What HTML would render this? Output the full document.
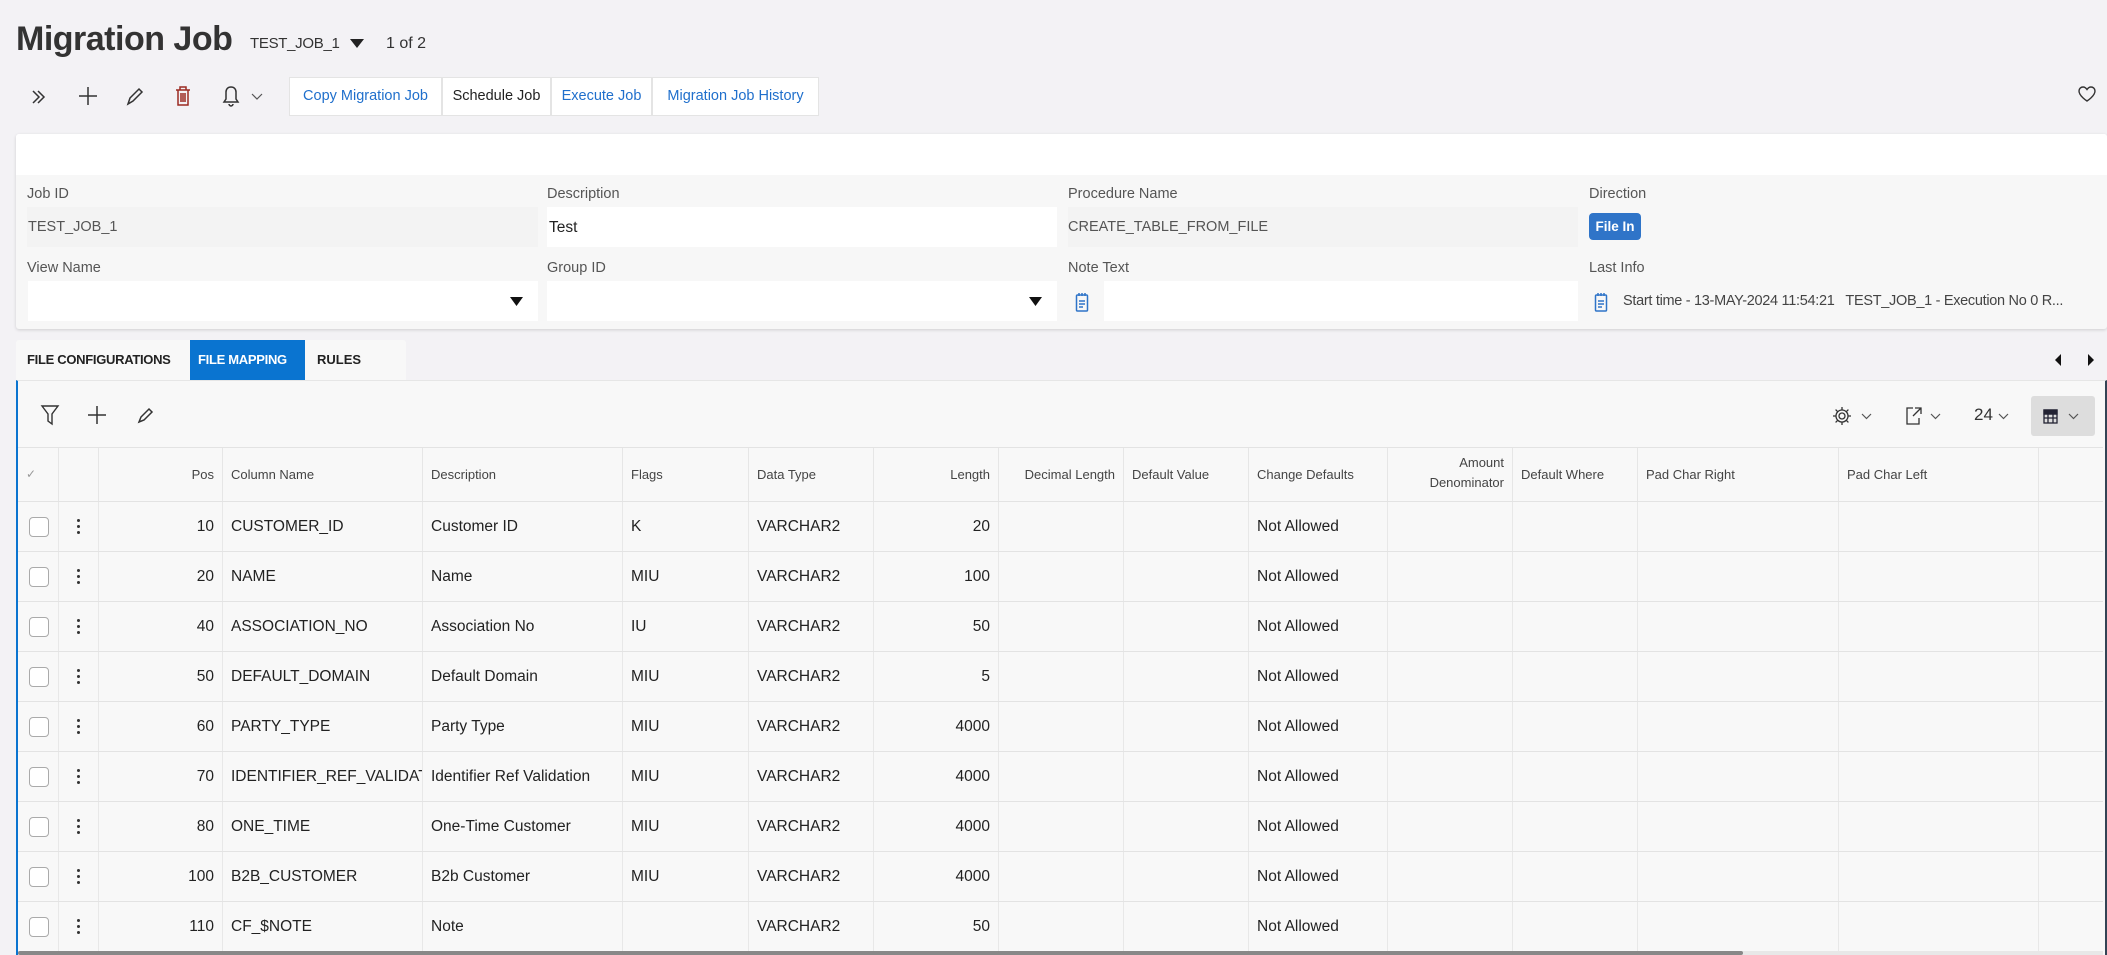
<!DOCTYPE html>
<html><head><meta charset="utf-8"><style>
*{box-sizing:border-box;margin:0;padding:0}
body{width:2107px;height:955px;overflow:hidden;background:#f3f2f5;font-family:"Liberation Sans",sans-serif;color:#333;position:relative;font-size:15px}
.a{position:absolute;white-space:nowrap}
.lbl{font-size:14.5px;color:#555}
.btn{position:absolute;top:77px;height:39px;background:#fff;border:1px solid #e4e4e4;font-size:14.5px;line-height:37px;text-align:center;color:#1f6fcc}
.hd{position:absolute;top:448px;height:53px;font-size:13px;color:#444;line-height:53px;border-right:1px solid #e6e6e6;padding:0 8px}
.cell{position:absolute;height:50px;line-height:50px;font-size:15.5px;color:#222;border-right:1px solid #e8e8e8;padding:0 8px;overflow:hidden}
.rowl{position:absolute;left:18px;width:2085px;height:1px;background:#e3e3e3}
.cb{position:absolute;left:29px;width:20px;height:20px;border:1.5px solid #aaa;border-radius:4px;background:#fff}
.dots{position:absolute;left:77px;width:3px}
.dots i{display:block;width:3px;height:3px;background:#333;border-radius:50%;margin-bottom:3px}
</style></head><body>
<div class="a" style="left:16px;top:20px;font-size:34px;font-weight:bold;color:#333;letter-spacing:-0.5px">Migration Job</div>
<div class="a" style="left:250px;top:35px;font-size:15px;color:#333;letter-spacing:-0.3px">TEST_JOB_1</div>
<svg class="a" style="left:349px;top:38px" width="16" height="12"><path d="M1 1h14L8 10z" fill="#222"/></svg>
<div class="a" style="left:386px;top:35px;font-size:16px;color:#333">1 of 2</div>

<svg class="a" style="left:28px;top:86px" width="22" height="22" fill="none" stroke="#333" stroke-width="1.5"><path d="M5 5l6 6-6 6M10 5l6 6-6 6"/></svg>
<svg class="a" style="left:77px;top:85px" width="22" height="22" fill="none" stroke="#333" stroke-width="1.5"><path d="M11 2v18M2 11h18"/></svg>
<svg class="a" style="left:124px;top:86px" width="22" height="22" fill="none" stroke="#333" stroke-width="1.5"><path d="M4 18l2-6 9-9 3 3-9 9z"/></svg>
<svg class="a" style="left:172px;top:85px" width="22" height="22" fill="none" stroke="#9b2b22" stroke-width="1.5"><path d="M4 5h14M8 5V2h6v3M6 5v15h10V5M9 8v9M11 8v9M13 8v9"/></svg>
<svg class="a" style="left:220px;top:85px" width="22" height="22" fill="none" stroke="#333" stroke-width="1.5"><path d="M11 2c-3 0-5 2-5 5v7l-2 3h14l-2-3V7c0-3-2-5-5-5zM9 19c0 1 1 2 2 2s2-1 2-2"/></svg>
<svg class="a" style="left:251px;top:93px" width="12" height="8" fill="none" stroke="#555" stroke-width="1.2"><path d="M1 1l5 5 5-5"/></svg>
<div class="btn" style="left:289px;width:153px">Copy Migration Job</div>
<div class="btn" style="left:442px;width:109px;color:#222">Schedule Job</div>
<div class="btn" style="left:551px;width:101px">Execute Job</div>
<div class="btn" style="left:652px;width:167px">Migration Job History</div>
<svg class="a" style="left:2077px;top:85px" width="20" height="18" fill="none" stroke="#333" stroke-width="1.4"><path d="M10 16S2 11 2 6c0-2.5 2-4 4-4 2 0 3 1 4 2.5C11 3 12 2 14 2c2 0 4 1.5 4 4 0 5-8 10-8 10z"/></svg>

<div class="a" style="left:16px;top:134px;width:2091px;height:195px;background:#f7f7f7;box-shadow:0 1px 3px rgba(0,0,0,.15);border-radius:3px"></div>
<div class="a" style="left:16px;top:134px;width:2091px;height:41px;background:#fff;border-radius:3px 3px 0 0"></div>
<div class="a lbl" style="left:27px;top:186px">Job ID</div>
<div class="a lbl" style="left:547px;top:186px">Description</div>
<div class="a lbl" style="left:1068px;top:186px">Procedure Name</div>
<div class="a lbl" style="left:1589px;top:186px">Direction</div>
<div class="a" style="left:27px;top:207px;width:511px;height:40px;background:#f3f3f3"></div>
<div class="a" style="left:28px;top:219px;font-size:14.5px;color:#555">TEST_JOB_1</div>
<div class="a" style="left:547px;top:207px;width:510px;height:40px;background:#fff"></div>
<div class="a" style="left:549px;top:219px;font-size:15.5px;color:#222">Test</div>
<div class="a" style="left:1068px;top:207px;width:510px;height:40px;background:#f3f3f3"></div>
<div class="a" style="left:1068px;top:219px;font-size:14.5px;color:#555">CREATE_TABLE_FROM_FILE</div>
<div class="a" style="left:1589px;top:213px;width:52px;height:27px;background:#2f74c8;border-radius:4px;color:#fff;font-weight:bold;font-size:13.5px;line-height:27px;text-align:center">File In</div>
<div class="a lbl" style="left:27px;top:260px">View Name</div>
<div class="a lbl" style="left:547px;top:260px">Group ID</div>
<div class="a lbl" style="left:1068px;top:260px">Note Text</div>
<div class="a lbl" style="left:1589px;top:260px">Last Info</div>
<div class="a" style="left:28px;top:281px;width:510px;height:40px;background:#fff"></div>
<svg class="a" style="left:510px;top:297px" width="13" height="9"><path d="M0 0h13L6.5 9z" fill="#111"/></svg>
<div class="a" style="left:547px;top:281px;width:510px;height:40px;background:#fff"></div>
<svg class="a" style="left:1029px;top:297px" width="13" height="9"><path d="M0 0h13L6.5 9z" fill="#111"/></svg>
<svg class="a" style="left:1075px;top:292px" width="14" height="20" fill="none" stroke="#2f74c8" stroke-width="1.5"><rect x="1.5" y="3" width="11" height="16" rx="1"/><path d="M4 1v3M7 1v3M10 1v3M4 9h6M4 12h6M4 15h4"/></svg>
<div class="a" style="left:1104px;top:281px;width:474px;height:40px;background:#fff"></div>
<svg class="a" style="left:1594px;top:292px" width="14" height="20" fill="none" stroke="#2f74c8" stroke-width="1.5"><rect x="1.5" y="3" width="11" height="16" rx="1"/><path d="M4 1v3M7 1v3M10 1v3M4 9h6M4 12h6M4 15h4"/></svg>
<div class="a" style="left:1623px;top:293px;font-size:14.5px;color:#444;letter-spacing:-0.3px">Start time - 13-MAY-2024 11:54:21&nbsp;&nbsp; TEST_JOB_1 - Execution No 0 R...</div>

<div class="a" style="left:16px;top:340px;width:390px;height:41px;background:#f8f8f8;border-radius:3px 3px 0 0"></div>
<div class="a" style="left:27px;top:352px;font-size:13px;font-weight:bold;color:#222;letter-spacing:-0.3px">FILE CONFIGURATIONS</div>
<div class="a" style="left:190px;top:340px;width:115px;height:41px;background:#0a74d0"></div>
<div class="a" style="left:198px;top:352px;font-size:13px;font-weight:bold;color:#fff;letter-spacing:-0.3px">FILE MAPPING</div>
<div class="a" style="left:317px;top:352px;font-size:13px;font-weight:bold;color:#222">RULES</div>
<svg class="a" style="left:2053px;top:353px" width="10" height="14"><path d="M8 1L2 7l6 6z" fill="#111"/></svg>
<svg class="a" style="left:2086px;top:353px" width="10" height="14"><path d="M2 1l6 6-6 6z" fill="#111"/></svg>

<div class="a" style="left:16px;top:380px;width:2091px;height:575px;background:#f8f8f8;border-left:2px solid #0a74d0;border-right:2px solid #345;border-top:1px solid #e6e6e6"></div>
<svg class="a" style="left:40px;top:404px" width="20" height="22" fill="none" stroke="#333" stroke-width="1.4"><path d="M2 2h16l-6 8v10l-4-3v-7z"/></svg>
<svg class="a" style="left:87px;top:405px" width="20" height="20" fill="none" stroke="#333" stroke-width="1.5"><path d="M10 1v18M1 10h18"/></svg>
<svg class="a" style="left:136px;top:405px" width="20" height="20" fill="none" stroke="#333" stroke-width="1.5"><path d="M3 17l2-5 8-8 3 3-8 8z"/></svg>
<svg class="a" style="left:1832px;top:406px" width="20" height="20" fill="none" stroke="#333" stroke-width="1.3"><circle cx="10" cy="10" r="3"/><path d="M10 1v3M10 16v3M1 10h3M16 10h3M3.6 3.6l2.1 2.1M14.3 14.3l2.1 2.1M3.6 16.4l2.1-2.1M14.3 5.7l2.1-2.1"/><circle cx="10" cy="10" r="6"/></svg>
<svg class="a" style="left:1861px;top:413px" width="11" height="7" fill="none" stroke="#555" stroke-width="1.2"><path d="M1 1l4.5 4.5L10 1"/></svg>
<svg class="a" style="left:1905px;top:406px" width="18" height="20" fill="none" stroke="#333" stroke-width="1.3"><path d="M8 2H2v16h12v-6M10 2h6v6M16 2l-8 8"/></svg>
<svg class="a" style="left:1930px;top:413px" width="11" height="7" fill="none" stroke="#555" stroke-width="1.2"><path d="M1 1l4.5 4.5L10 1"/></svg>
<div class="a" style="left:1974px;top:405px;font-size:17px;color:#333">24</div>
<svg class="a" style="left:1998px;top:413px" width="11" height="7" fill="none" stroke="#555" stroke-width="1.2"><path d="M1 1l4.5 4.5L10 1"/></svg>
<div class="a" style="left:2031px;top:396px;width:64px;height:40px;background:#ddd;border-radius:3px"></div>
<svg class="a" style="left:2043px;top:409px" width="15" height="15" fill="none" stroke="#223" stroke-width="1.3"><rect x="1" y="1" width="13" height="13"/><path d="M1 5h13M1 9h13M5 5v9M10 5v9"/><rect x="1" y="1" width="13" height="4" fill="#223"/></svg>
<svg class="a" style="left:2068px;top:413px" width="11" height="7" fill="none" stroke="#555" stroke-width="1.2"><path d="M1 1l4.5 4.5L10 1"/></svg>

<div class="rowl" style="top:447px"></div>
<div class="hd" style="left:18px;width:41px;color:#999;font-size:12px">✓</div>
<div class="hd" style="left:59px;width:40px"></div>
<div class="hd" style="left:99px;width:124px;text-align:right">Pos</div>
<div class="hd" style="left:223px;width:200px">Column Name</div>
<div class="hd" style="left:423px;width:200px">Description</div>
<div class="hd" style="left:623px;width:126px">Flags</div>
<div class="hd" style="left:749px;width:125px">Data Type</div>
<div class="hd" style="left:874px;width:125px;text-align:right">Length</div>
<div class="hd" style="left:999px;width:125px;text-align:right">Decimal Length</div>
<div class="hd" style="left:1124px;width:125px">Default Value</div>
<div class="hd" style="left:1249px;width:139px">Change Defaults</div>
<div class="hd" style="left:1388px;width:125px;text-align:right;line-height:20px;padding-top:5px">Amount<br>Denominator</div>
<div class="hd" style="left:1513px;width:125px">Default Where</div>
<div class="hd" style="left:1638px;width:201px">Pad Char Right</div>
<div class="hd" style="left:1839px;width:200px">Pad Char Left</div>
<div class="rowl" style="top:501px"></div>

<div id="rows"></div>
<script>
var d=[["10","CUSTOMER_ID","Customer ID","K","20"],["20","NAME","Name","MIU","100"],["40","ASSOCIATION_NO","Association No","IU","50"],["50","DEFAULT_DOMAIN","Default Domain","MIU","5"],["60","PARTY_TYPE","Party Type","MIU","4000"],["70","IDENTIFIER_REF_VALIDATI","Identifier Ref Validation","MIU","4000"],["80","ONE_TIME","One-Time Customer","MIU","4000"],["100","B2B_CUSTOMER","B2b Customer","MIU","4000"],["110","CF_$NOTE","Note","","50"]];
var h="";
d.forEach(function(r,i){var t=502+i*50;
h+='<div class="cb" style="top:'+(t+15)+'px"></div><div class="dots" style="top:'+(t+17)+'px"><i></i><i></i><i></i></div>';
var c=[[18,41,""],[59,40,""],[99,124,r[0],1],[223,200,r[1]],[423,200,r[2]],[623,126,r[3]],[749,125,"VARCHAR2"],[874,125,r[4],1],[999,125,""],[1124,125,""],[1249,139,"Not Allowed"],[1388,125,""],[1513,125,""],[1638,201,""],[1839,200,""]];
c.forEach(function(x){h+='<div class="cell" style="top:'+t+'px;left:'+x[0]+'px;width:'+x[1]+'px;'+(x[3]?'text-align:right':'')+'">'+x[2]+'</div>';});
h+='<div class="rowl" style="top:'+(t+49)+'px"></div>';});
document.getElementById("rows").innerHTML=h;
</script>
<div class="a" style="left:18px;top:951px;width:2085px;height:4px;background:#e8e8e8"></div>
<div class="a" style="left:18px;top:951px;width:1725px;height:4px;background:#888;border-radius:2px"></div>
</body></html>
